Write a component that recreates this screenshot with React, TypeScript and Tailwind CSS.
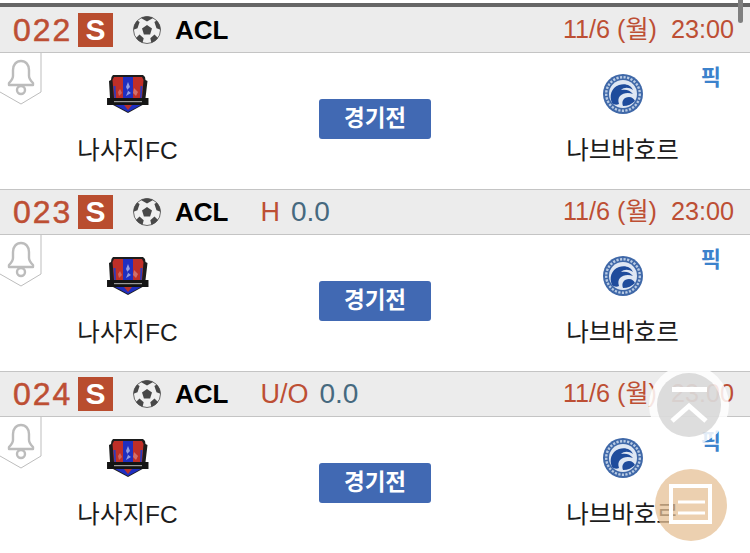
import React from "react";

function Ball() {
  return (
    <svg width="28" height="28" viewBox="0 0 28 28" className="shrink-0">
      <circle cx="14" cy="14" r="13.500" fill="#f0f0f0" stroke="#6a6a6a" strokeWidth="1" />
      <path d="M14 9l5 3.600-1.900 5.900h-6.200L9 12.600z" fill="#484848" />
      <path d="M14 .5c2.300 0 4.300.5 6.100 1.500L14 5.500 7.900 2C9.700 1 11.700.5 14 .5z" fill="#484848" />
      <path d="M23.700 4.500c2.400 2.400 3.800 5.600 3.800 9.300l-4-1.600-2.100-6.300z" fill="#484848" />
      <path d="M4.300 4.500C1.900 6.900.5 10.100.5 13.800l4-1.600 2.100-6.300z" fill="#484848" />
      <path d="M3 22c1.600 2.300 3.900 4 6.600 4.800l1.100-4.500-4.200-3.700z" fill="#484848" />
      <path d="M25 22c-1.600 2.300-3.900 4-6.600 4.800l-1.100-4.500 4.200-3.700z" fill="#484848" />
    </svg>
  );
}

function Bell() {
  return (
    <svg width="42" height="52" viewBox="0 0 42 52" className="absolute left-0 top-0">
      <path d="M41 0V39L21 51 0 39" fill="#fff" stroke="#bdbdbd" strokeWidth="1" />
      <path
        d="M21 8c-5 0-8 4-8 9v6c0 3-2 5-4 7v2h24v-2c-2-2-4-4-4-7v-6c0-5-3-9-8-9z"
        fill="none"
        stroke="#bcbcbc"
        strokeWidth="2.400"
        strokeLinejoin="round"
      />
      <circle cx="21" cy="37" r="4" fill="none" stroke="#bcbcbc" strokeWidth="2.400" />
    </svg>
  );
}

function Shield() {
  return (
    <svg width="42" height="40" viewBox="0 0 42 40">
      <path d="M6 1h30l2 2 .5 3 2 1-2 17h3v7h-6L21 39 6 31H0v-7h3L2 7l2-1 .5-3z" fill="#1c1c1c" />
      <path d="M7 3h28l1.500 3-1.500 18H7L5.500 6z" fill="#bf2f28" />
      <rect x="16" y="3" width="10" height="21" fill="#1f2fc0" />
      <path d="M6.500 12h2L9 24H7.500z" fill="#2a3cc0" />
      <path d="M33.500 12h2L34.500 24H33z" fill="#2a3cc0" />
      <path d="M21 8l2 5-3 3 4 3-5 3 2-5-2-4z" fill="#aeb8e8" opacity="0.8" />
      <path d="M27 14l4 4-2 4-3-3z" fill="#d98a84" opacity="0.7" />
      <path d="M13 15l2 4-3 3-1-4z" fill="#d98a84" opacity="0.6" />
      <rect x="1" y="24" width="40" height="7" fill="#141414" />
      <rect x="7" y="27" width="28" height="1.200" fill="#9a9a9a" />
      <path d="M8 31h26l-13 7z" fill="#1f2fc0" />
      <path d="M17 31h8l-4 5z" fill="#b8322c" />
    </svg>
  );
}

function Crest() {
  return (
    <svg width="40" height="40" viewBox="0 0 40 40">
      <circle cx="20" cy="20" r="20" fill="#3f68a8" />
      <circle cx="20" cy="20" r="16.800" fill="none" stroke="#b9cbe4" strokeWidth="2.400" strokeDasharray="2.200 1.400" />
      <circle cx="20" cy="20" r="14" fill="#dfe7f3" />
      <path d="M9 29c-3-7-1-15 7-18 6-2 12 0 14 5-4-3-9-3-12 0 5-1 9 0 12 4-5-2-10-1-13 2-2 2-2 5-1 8-2 1-5 1-7-1z" fill="#1f4c9c" />
      <path d="M20 32c-2-5 1-9 6-9 3 0 5 2 6 4-3 3-7 5-12 5z" fill="#1f4c9c" />
    </svg>
  );
}

function Match({ no, extra }: { no: string; extra?: { label: string; value: string } }) {
  return (
    <section>
      <header className="flex h-[45px] items-center border-b border-[#c4c4c4] bg-[#ececec] pl-[13px] pr-[16px] text-[27px] text-[#bd4f34]">
        <span className="w-[65px] text-[32px] leading-none tracking-[2px] [-webkit-text-stroke:0.5px_#bd4f34]">{no}</span>
        <span className="flex h-[34px] w-[35px] items-center justify-center bg-[#b94d2f] text-[30px] font-bold leading-none text-white">S</span>
        <span className="ml-[20px] flex"><Ball /></span>
        <span className="ml-[14px] text-[26px] font-bold leading-none text-black">ACL</span>
        {extra && (
          <span className="ml-[32px] flex items-center gap-[11px] leading-none">
            <span>{extra.label}</span>
            <span className="text-[28px] text-[#46697f]">{extra.value}</span>
          </span>
        )}
        <span className="ml-auto whitespace-pre text-[25.200px] leading-none">11/6 (월)  23:00</span>
      </header>
      <div className="relative flex h-[137px] items-start border-b border-[#c4c4c4] bg-white">
        <Bell />
        <div className="flex w-[255px] flex-col items-center pt-[21px]">
          <Shield />
          <span className="mt-[22px] text-[24.500px] leading-[30px] text-[#1c1c1c]">나사지FC</span>
        </div>
        <div className="flex flex-1 justify-center pt-[46px]">
          <button className="flex h-[40px] w-[112px] items-center justify-center rounded-[3px] bg-[#4169b3] text-[22.500px] font-bold leading-none text-white">
            경기전
          </button>
        </div>
        <div className="flex w-[255px] flex-col items-center pt-[21px]">
          <Crest />
          <span className="mt-[22px] text-[24.500px] leading-[30px] text-[#1c1c1c]">나브바호르</span>
        </div>
        <span className="absolute right-[29px] top-[12px] text-[22px] font-bold leading-[26px] text-[#3c82cc]">픽</span>
      </div>
    </section>
  );
}

export default function App() {
  return (
    <div
      className="relative h-[553px] w-[750px] overflow-hidden bg-white pt-[3px]"
      style={{ fontFamily: '"Liberation Sans", "Noto Sans CJK KR", sans-serif' }}
    >
      <div className="h-[4px] bg-[#666]" />
      <div className="h-px bg-[#ececec]" />
      <Match no="022" />
      <Match no="023" extra={{ label: "H", value: "0.0" }} />
      <Match no="024" extra={{ label: "U/O", value: "0.0" }} />

      <div className="absolute right-[7px] top-0 h-[23px] w-[5px] rounded-b-full bg-[#808080]" />

      <div className="absolute left-[649px] top-[365px] flex h-[80px] w-[80px] items-center justify-center rounded-full bg-white/85">
        <div className="flex h-[64px] w-[64px] items-center justify-center rounded-full bg-[#bbb]/50">
          <svg width="40" height="44" viewBox="0 0 40 44">
            <path d="M3 6.500h35" stroke="#fff" strokeWidth="5" fill="none" />
            <path d="M3 38l17-15 17 15" stroke="#fff" strokeWidth="5" fill="none" />
          </svg>
        </div>
      </div>

      <div className="absolute left-[655px] top-[469px] flex h-[72px] w-[72px] items-center justify-center rounded-full bg-[#e5c096]/75">
        <svg width="44" height="42" viewBox="0 0 44 42">
          <rect x="2" y="2" width="39" height="36" fill="none" stroke="#fff" strokeWidth="4" />
          <path d="M9 18h27M9 29h27" stroke="#fff" strokeWidth="3" fill="none" />
        </svg>
      </div>
    </div>
  );
}
